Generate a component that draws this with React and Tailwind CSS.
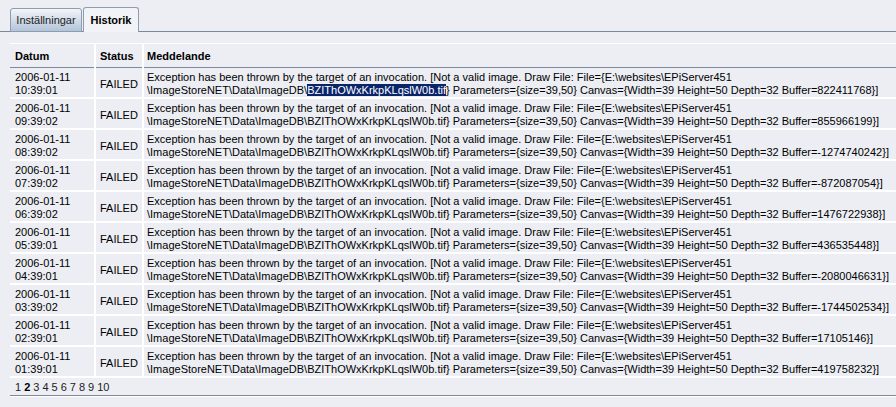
import React from 'react';

const rows = [
  ['10:39:01', '822411768'],
  ['09:39:02', '855966199'],
  ['08:39:02', '-1274740242'],
  ['07:39:02', '-872087054'],
  ['06:39:02', '1476722938'],
  ['05:39:01', '436535448'],
  ['04:39:01', '-2080046631'],
  ['03:39:02', '-1744502534'],
  ['02:39:01', '17105146'],
  ['01:39:01', '419758232'],
];

const FILE = 'BZIThOWxKrkpKLqslW0b.tif';

export default function App() {
  return (
    <div className="w-[896px] h-[407px] overflow-hidden bg-[#ECEEF3] font-['Liberation_Sans',Arial,sans-serif] text-[11px] text-black">
      {/* Tabs */}
      <div className="flex items-end h-[32px] pl-[10px] border-b border-[#7A889C]">
        <div className="w-[72px] h-[24px] -mb-px flex items-center justify-center rounded-t-[3px] border border-[#8E9CB0] bg-gradient-to-b from-[#F3F5F8] to-[#B3C4D9] text-[#222]">
          Inställningar
        </div>
        <div className="ml-px w-[56px] h-[25px] -mb-px flex items-center justify-center rounded-t-[3px] border border-b-0 border-[#8E9CB0] bg-[#F1F3F6] font-bold">
          Historik
        </div>
      </div>

      {/* Panel */}
      <div className="pl-[10px] pt-[11px]">
        <table className="w-[886px] border-collapse leading-[13px]">
          <thead>
            <tr className="border-t border-white border-b border-b-[#7E8A9A] h-[24px]">
              <th className="w-[85px] pl-[5px] pt-[1px] text-left font-bold align-middle">Datum</th>
              <th className="w-[48px] pl-[4px] pt-[1px] text-left font-bold border-l-2 border-white align-middle">Status</th>
              <th className="pl-[3px] pt-[1px] text-left font-bold border-l-2 border-white align-middle">Meddelande</th>
            </tr>
          </thead>
          <tbody>
            {rows.map(([time, buffer], i) => (
              <tr key={i} className="border-b-2 border-white">
                <td className="pl-[5px] pt-[3px] align-top">
                  2006-01-11
                  <br />
                  {time}
                </td>
                <td className="pl-[4px] pt-[3px] border-l-2 border-white align-middle">FAILED</td>
                <td className="pl-[3px] pt-[3px] border-l-2 border-white align-top whitespace-nowrap">
                  Exception has been thrown by the target of an invocation. [Not a valid image. Draw File: File={'{'}E:\websites\EPiServer451
                  <br />
                  \ImageStoreNET\Data\ImageDB\
                  {i === 0 ? <span className="bg-[#0A246A] text-white">{FILE}</span> : FILE}
                  {'}'} Parameters={'{'}size=39,50{'}'} Canvas={'{'}Width=39 Height=50 Depth=32 Buffer={buffer}{'}'}]
                </td>
              </tr>
            ))}
          </tbody>
        </table>

        <div className="h-[18px] pl-[5px] pt-[1px] flex items-center gap-[3px] border-b border-[#7E8A9A]">
          {[1, 2, 3, 4, 5, 6, 7, 8, 9, 10].map((n) => (
            <span key={n} className={n === 2 ? 'font-bold' : 'text-[#222]'}>{n}</span>
          ))}
        </div>
        <div className="h-px bg-white" />
      </div>
    </div>
  );
}
